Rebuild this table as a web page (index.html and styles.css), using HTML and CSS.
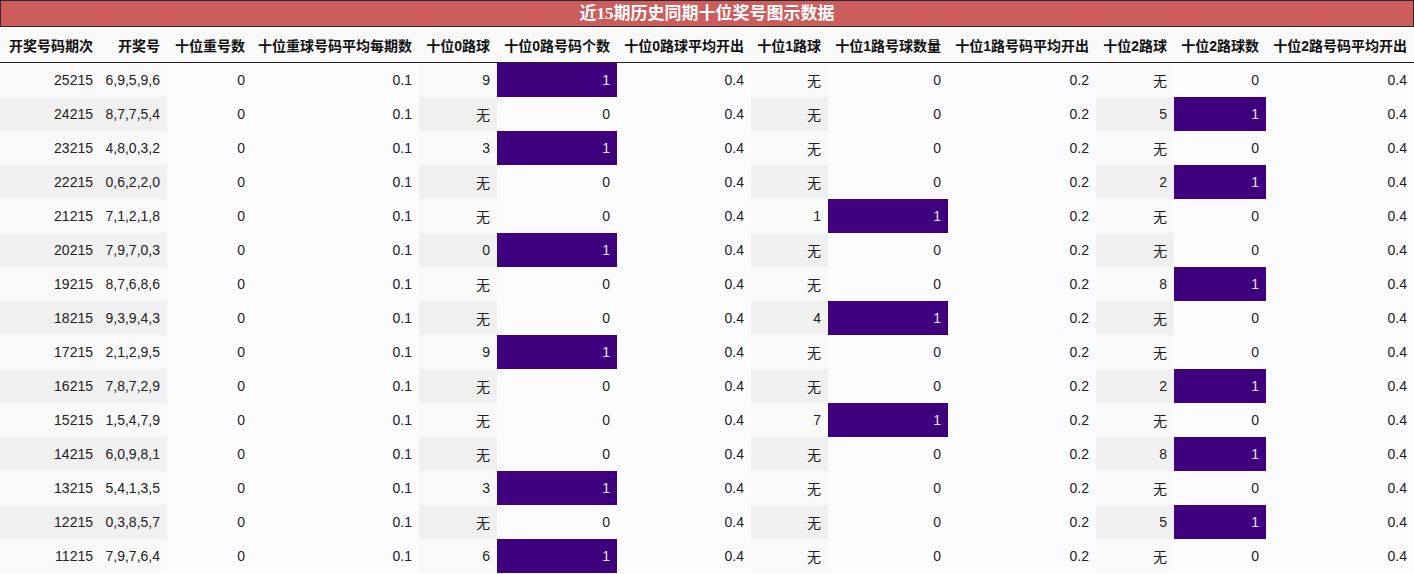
FILE: index.html
```html
<!DOCTYPE html>
<html lang="zh-CN">
<head>
<meta charset="utf-8">
<title>近15期历史同期十位奖号图示数据</title>
<link rel="stylesheet" href="styles.css">
</head>
<body>
<div class="title">近15期历史同期十位奖号图示数据</div>
<table class="grid">
<colgroup>
<col class="c1"><col class="c2"><col class="c3"><col class="c4"><col class="c5"><col class="c6"><col class="c7"><col class="c8"><col class="c9"><col class="c10"><col class="c11"><col class="c12"><col class="c13">
</colgroup>
<thead>
<tr>
<th>开奖号码期次</th><th>开奖号</th><th>十位重号数</th><th>十位重球号码平均每期数</th><th>十位0路球</th><th>十位0路号码个数</th><th>十位0路球平均开出</th><th>十位1路球</th><th>十位1路号球数量</th><th>十位1路号码平均开出</th><th>十位2路球</th><th>十位2路球数</th><th>十位2路号码平均开出</th>
</tr>
</thead>
<tbody>
<tr><td class="g">25215</td><td class="g">6,9,5,9,6</td><td>0</td><td>0.1</td><td class="g">9</td><td class="hit">1</td><td>0.4</td><td class="g">无</td><td>0</td><td>0.2</td><td class="g">无</td><td>0</td><td>0.4</td></tr>
<tr><td class="g">24215</td><td class="g">8,7,7,5,4</td><td>0</td><td>0.1</td><td class="g">无</td><td>0</td><td>0.4</td><td class="g">无</td><td>0</td><td>0.2</td><td class="g">5</td><td class="hit">1</td><td>0.4</td></tr>
<tr><td class="g">23215</td><td class="g">4,8,0,3,2</td><td>0</td><td>0.1</td><td class="g">3</td><td class="hit">1</td><td>0.4</td><td class="g">无</td><td>0</td><td>0.2</td><td class="g">无</td><td>0</td><td>0.4</td></tr>
<tr><td class="g">22215</td><td class="g">0,6,2,2,0</td><td>0</td><td>0.1</td><td class="g">无</td><td>0</td><td>0.4</td><td class="g">无</td><td>0</td><td>0.2</td><td class="g">2</td><td class="hit">1</td><td>0.4</td></tr>
<tr><td class="g">21215</td><td class="g">7,1,2,1,8</td><td>0</td><td>0.1</td><td class="g">无</td><td>0</td><td>0.4</td><td class="g">1</td><td class="hit">1</td><td>0.2</td><td class="g">无</td><td>0</td><td>0.4</td></tr>
<tr><td class="g">20215</td><td class="g">7,9,7,0,3</td><td>0</td><td>0.1</td><td class="g">0</td><td class="hit">1</td><td>0.4</td><td class="g">无</td><td>0</td><td>0.2</td><td class="g">无</td><td>0</td><td>0.4</td></tr>
<tr><td class="g">19215</td><td class="g">8,7,6,8,6</td><td>0</td><td>0.1</td><td class="g">无</td><td>0</td><td>0.4</td><td class="g">无</td><td>0</td><td>0.2</td><td class="g">8</td><td class="hit">1</td><td>0.4</td></tr>
<tr><td class="g">18215</td><td class="g">9,3,9,4,3</td><td>0</td><td>0.1</td><td class="g">无</td><td>0</td><td>0.4</td><td class="g">4</td><td class="hit">1</td><td>0.2</td><td class="g">无</td><td>0</td><td>0.4</td></tr>
<tr><td class="g">17215</td><td class="g">2,1,2,9,5</td><td>0</td><td>0.1</td><td class="g">9</td><td class="hit">1</td><td>0.4</td><td class="g">无</td><td>0</td><td>0.2</td><td class="g">无</td><td>0</td><td>0.4</td></tr>
<tr><td class="g">16215</td><td class="g">7,8,7,2,9</td><td>0</td><td>0.1</td><td class="g">无</td><td>0</td><td>0.4</td><td class="g">无</td><td>0</td><td>0.2</td><td class="g">2</td><td class="hit">1</td><td>0.4</td></tr>
<tr><td class="g">15215</td><td class="g">1,5,4,7,9</td><td>0</td><td>0.1</td><td class="g">无</td><td>0</td><td>0.4</td><td class="g">7</td><td class="hit">1</td><td>0.2</td><td class="g">无</td><td>0</td><td>0.4</td></tr>
<tr><td class="g">14215</td><td class="g">6,0,9,8,1</td><td>0</td><td>0.1</td><td class="g">无</td><td>0</td><td>0.4</td><td class="g">无</td><td>0</td><td>0.2</td><td class="g">8</td><td class="hit">1</td><td>0.4</td></tr>
<tr><td class="g">13215</td><td class="g">5,4,1,3,5</td><td>0</td><td>0.1</td><td class="g">3</td><td class="hit">1</td><td>0.4</td><td class="g">无</td><td>0</td><td>0.2</td><td class="g">无</td><td>0</td><td>0.4</td></tr>
<tr><td class="g">12215</td><td class="g">0,3,8,5,7</td><td>0</td><td>0.1</td><td class="g">无</td><td>0</td><td>0.4</td><td class="g">无</td><td>0</td><td>0.2</td><td class="g">5</td><td class="hit">1</td><td>0.4</td></tr>
<tr><td class="g">11215</td><td class="g">7,9,7,6,4</td><td>0</td><td>0.1</td><td class="g">6</td><td class="hit">1</td><td>0.4</td><td class="g">无</td><td>0</td><td>0.2</td><td class="g">无</td><td>0</td><td>0.4</td></tr>
</tbody>
</table>
</body>
</html>
```
FILE: styles.css
```css
html, body {
  margin: 0;
  padding: 0;
  background: #ffffff;
}

body {
  width: 1414px;
  font-family: "Liberation Sans", "Noto Sans CJK SC", sans-serif;
  color: #222222;
}

.title {
  box-sizing: border-box;
  height: 27px;
  border: 1px solid #2a2a2a;
  background: #cd5c5c;
  color: #ffffff;
  font-family: "Liberation Serif", "Noto Sans CJK SC", serif;
  font-weight: bold;
  font-size: 17px;
  line-height: 25px;
  text-align: center;
}

.grid {
  width: 1414px;
  table-layout: fixed;
  border-collapse: collapse;
  border-spacing: 0;
  font-size: 14px;
}

.c1 { width: 100px; }
.c2 { width: 67px; }
.c3 { width: 85px; }
.c4 { width: 167px; }
.c5 { width: 78px; }
.c6 { width: 120px; }
.c7 { width: 134px; }
.c8 { width: 77px; }
.c9 { width: 120px; }
.c10 { width: 148px; }
.c11 { width: 78px; }
.c12 { width: 92px; }
.c13 { width: 148px; }

.grid th {
  height: 35px;
  padding: 0 7px 0 0;
  background: #f9f9f9;
  border-bottom: 1px solid #222222;
  font-family: "Liberation Sans", "Noto Sans CJK SC", sans-serif;
  font-weight: bold;
  font-size: 14px;
  text-align: right;
  white-space: nowrap;
  color: #111111;
}

.grid td {
  height: 34px;
  padding: 0 7px 0 0;
  text-align: right;
  white-space: nowrap;
  background: #fcfcff;
}

.grid tbody tr:nth-child(odd) td.g {
  background: #f9f9f9;
}

.grid tbody tr:nth-child(even) td.g {
  background: #f0f0f0;
}

.grid td.hit {
  background: #3f007d;
  color: #e4e0ee;
}
```
